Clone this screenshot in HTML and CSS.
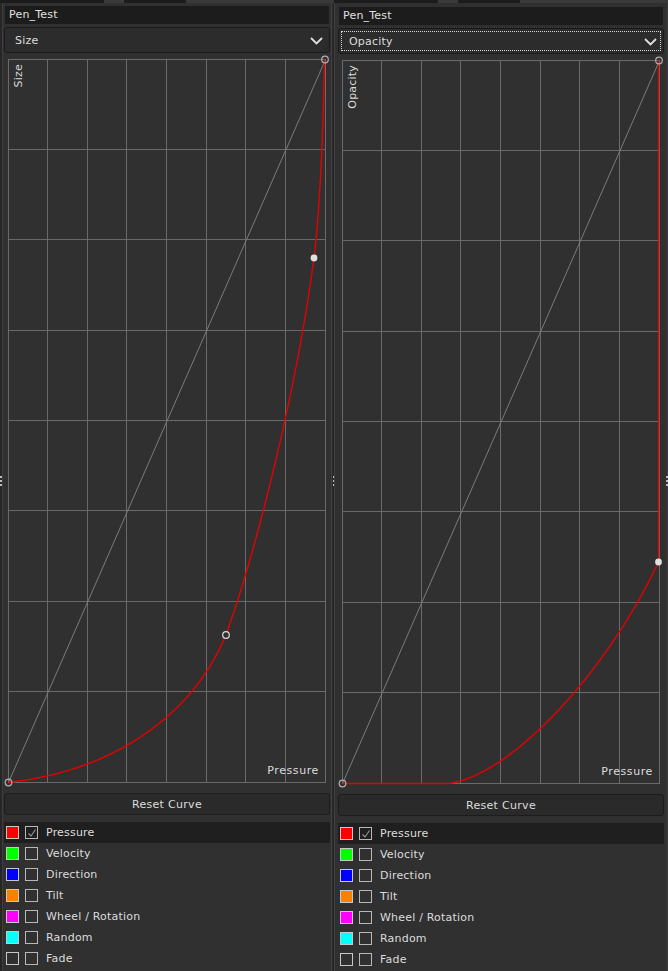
FILE: index.html
```html
<!DOCTYPE html>
<html>
<head>
<meta charset="utf-8">
<link rel="stylesheet" href="styles.css">
</head>
<body>
<div class="topbar">
  <span class="tab t1"></span><span class="tab t2"></span><span class="tab t3"></span><span class="tab t4"></span>
</div>
<div class="panels">
  <section class="panel left">
    <div class="name">Pen_Test</div>
    <div class="dropdown"><span>Size</span>
      <svg class="chev" width="13" height="8" viewBox="0 0 13 8"><path d="M1 1 L6.5 6.5 L12 1" fill="none" stroke="#e0e0e0" stroke-width="1.8"/></svg>
    </div>
    <div class="graph">
      <svg width="320" height="727" viewBox="0 0 320 727">
        <g stroke="#6a6a6a" stroke-width="1" shape-rendering="crispEdges" fill="none">
          <rect x="1.5" y="1.5" width="317" height="723"/>
          <path d="M40.5 1.5V724.5M80.5 1.5V724.5M119.5 1.5V724.5M159.5 1.5V724.5M199.5 1.5V724.5M238.5 1.5V724.5M278.5 1.5V724.5"/>
          <path d="M1.5 91.5H318.5M1.5 181.5H318.5M1.5 272.5H318.5M1.5 362.5H318.5M1.5 452.5H318.5M1.5 543.5H318.5M1.5 633.5H318.5"/>
        </g>
        <line x1="1.5" y1="724.5" x2="318.5" y2="1.5" stroke="#7c7c7c" stroke-width="1"/>
        <path d="M1.5 724.5 C90 715 180 670 219 577 C250 490 290 330 307 200 C313 150 316 80 317.5 1.5" fill="none" stroke="#e60000" stroke-width="1.4"/>
        <circle cx="1.5" cy="724.5" r="3.3" fill="none" stroke="#b0b0b0" stroke-width="1.2"/>
        <circle cx="318" cy="1.5" r="3.3" fill="none" stroke="#b0b0b0" stroke-width="1.2"/>
        <circle cx="219" cy="577" r="3.3" fill="#303030" stroke="#dcdcdc" stroke-width="1.2"/>
        <circle cx="307" cy="200" r="3.4" fill="#e0e0e0"/>
      </svg>
      <span class="vlabel">Size</span>
      <span class="hlabel">Pressure</span>
    </div>
    <button class="reset">Reset Curve</button>
    <ul class="list">
      <li class="sel"><i class="sw red"></i><i class="cb on"><svg width="10" height="10" viewBox="0 0 10 10"><path d="M1.5 5.5 L4 8 L8.5 1.5" fill="none" stroke="#9a9a9a" stroke-width="1.1"/></svg></i>Pressure</li>
      <li><i class="sw green"></i><i class="cb"></i>Velocity</li>
      <li><i class="sw blue"></i><i class="cb"></i>Direction</li>
      <li><i class="sw orange"></i><i class="cb"></i>Tilt</li>
      <li><i class="sw magenta"></i><i class="cb"></i>Wheel / Rotation</li>
      <li><i class="sw cyan"></i><i class="cb"></i>Random</li>
      <li><i class="sw"></i><i class="cb"></i>Fade</li>
    </ul>
    <span class="grip g-left"></span>
    <span class="grip g-mid"></span>
  </section>
  <section class="panel right">
    <div class="name">Pen_Test</div>
    <div class="dropdown focus"><span>Opacity</span>
      <svg class="chev" width="13" height="8" viewBox="0 0 13 8"><path d="M1 1 L6.5 6.5 L12 1" fill="none" stroke="#e0e0e0" stroke-width="1.8"/></svg>
    </div>
    <div class="graph">
      <svg width="320" height="727" viewBox="0 0 320 727">
        <g stroke="#6a6a6a" stroke-width="1" shape-rendering="crispEdges" fill="none">
          <rect x="1.5" y="1.5" width="317" height="723"/>
          <path d="M40.5 1.5V724.5M80.5 1.5V724.5M119.5 1.5V724.5M159.5 1.5V724.5M199.5 1.5V724.5M238.5 1.5V724.5M278.5 1.5V724.5"/>
          <path d="M1.5 91.5H318.5M1.5 181.5H318.5M1.5 272.5H318.5M1.5 362.5H318.5M1.5 452.5H318.5M1.5 543.5H318.5M1.5 633.5H318.5"/>
        </g>
        <line x1="1.5" y1="724.5" x2="318.5" y2="1.5" stroke="#7c7c7c" stroke-width="1"/>
        <path d="M1.5 724.5 L108 724.5 C170 716 265 615 317.5 503 L317.5 1.5" fill="none" stroke="#e60000" stroke-width="1.4"/>
        <circle cx="1.5" cy="724.5" r="3.3" fill="none" stroke="#b0b0b0" stroke-width="1.2"/>
        <circle cx="318" cy="1.5" r="3.3" fill="none" stroke="#b0b0b0" stroke-width="1.2"/>
        <circle cx="317.5" cy="503" r="3.4" fill="#e0e0e0"/>
      </svg>
      <span class="vlabel">Opacity</span>
      <span class="hlabel">Pressure</span>
    </div>
    <button class="reset">Reset Curve</button>
    <ul class="list">
      <li class="sel"><i class="sw red"></i><i class="cb on"><svg width="10" height="10" viewBox="0 0 10 10"><path d="M1.5 5.5 L4 8 L8.5 1.5" fill="none" stroke="#9a9a9a" stroke-width="1.1"/></svg></i>Pressure</li>
      <li><i class="sw green"></i><i class="cb"></i>Velocity</li>
      <li><i class="sw blue"></i><i class="cb"></i>Direction</li>
      <li><i class="sw orange"></i><i class="cb"></i>Tilt</li>
      <li><i class="sw magenta"></i><i class="cb"></i>Wheel / Rotation</li>
      <li><i class="sw cyan"></i><i class="cb"></i>Random</li>
      <li><i class="sw"></i><i class="cb"></i>Fade</li>
    </ul>
    <span class="grip g-right"></span>
  </section>
</div>
</body>
</html>
```
FILE: styles.css
```css
* { box-sizing: border-box; }
html, body { margin: 0; padding: 0; }
body {
  width: 668px;
  height: 971px;
  overflow: hidden;
  background: #303030;
  font-family: "DejaVu Sans", "Noto Sans", sans-serif;
  font-size: 11px;
  letter-spacing: 0.2px;
  color: #dcdcdc;
}
.topbar {
  height: 3px;
  background: #3a3a3a;
  position: relative;
  display: flex;
}
.tab { display: block; height: 3px; background: #1c1c1c; }
.t1 { width: 104px; margin-left: 0; }
.t2 { width: 62px; margin-left: 20px; }
.t3 { width: 104px; margin-left: 148px; }
.t4 { width: 62px; margin-left: 20px; }
.panels { display: flex; height: 968px; }
.panel {
  position: relative;
  width: 334px;
  padding: 3px 4px 0;
  background: #303030;
  display: flex;
  flex-direction: column;
}
.panel.left {
  box-shadow: inset 2px 0 0 #262626, inset 3px 0 0 #3e3e3e, inset -1px 0 0 #252525, inset -2px 0 0 #2a2a2a, inset -3px 0 0 #404040;
}
.panel.right {
  padding-top: 4px;
  box-shadow: inset 1px 0 0 #404040, inset -1px 0 0 #3e3e3e;
}
.name {
  height: 18px;
  margin: 0 1px;
  padding-left: 4px;
  line-height: 18px;
  background: #1c1c1c;
  color: #e0e0e0;
}
.dropdown {
  position: relative;
  margin-top: 3px;
  height: 26px;
  border: 1px solid #1b1b1b;
  border-radius: 3px;
  background: #2c2c2c;
  display: flex;
  align-items: center;
  justify-content: space-between;
  padding: 0 6px 0 10px;
}
.dropdown.focus::after {
  content: "";
  position: absolute;
  inset: 2px;
  border: 1px dotted #d8d8d8;
}
.chev { display: block; margin-top: 1px; }
.graph {
  position: relative;
  margin: 5px 0 0 3px;
  width: 320px;
  height: 727px;
}
.graph svg { display: block; overflow: visible; }
.vlabel {
  position: absolute;
  left: 6px;
  top: 6px;
  writing-mode: vertical-rl;
  transform: rotate(180deg);
  line-height: 12px;
}
.hlabel {
  position: absolute;
  right: 8px;
  bottom: 8px;
  line-height: 12px;
  letter-spacing: 0.6px;
}
.reset {
  margin-top: 8px;
  height: 22px;
  border: 1px solid #1c1c1c;
  border-radius: 3px;
  background: #2a2a2a;
  color: #dcdcdc;
  font-family: inherit;
  font-size: 11px;
  letter-spacing: 0.3px;
  padding: 0;
}
.list {
  list-style: none;
  margin: 7px 0 0;
  padding: 0;
}
.list li {
  height: 21px;
  display: flex;
  align-items: center;
  padding-left: 2px;
}
.list li.sel { background: #1f1f1f; }
.sw, .cb {
  display: flex;
  align-items: center;
  justify-content: center;
  width: 13px;
  height: 13px;
  border: 1px solid #c8c8c8;
}
.sw { margin-right: 6px; }
.cb { margin-right: 8px; border-color: #b8b8b8; }
.cb svg { display: block; }
.red { background: #ff0000; }
.green { background: #00ff00; }
.blue { background: #0000ff; }
.orange { background: #ff8000; }
.magenta { background: #ff00ff; }
.cyan { background: #00ffff; }
.grip {
  position: absolute;
  top: 473px;
  width: 2px;
  height: 11px;
  background: repeating-linear-gradient(to bottom, #bdbdbd 0 2px, transparent 2px 4px);
}
.g-left { left: 0; }
.g-mid { right: -1px; }
.g-right { right: 0; }
```
